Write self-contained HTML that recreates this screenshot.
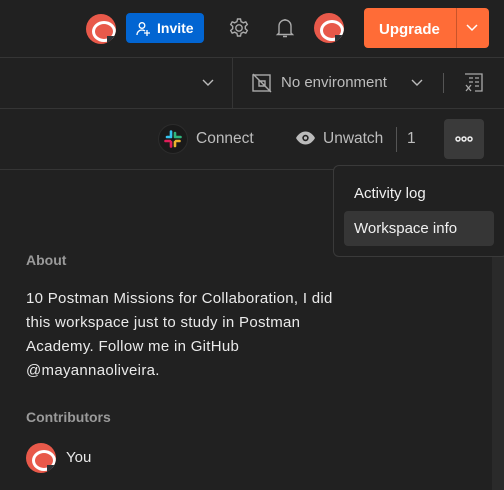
<!DOCTYPE html>
<html><head><meta charset="utf-8"><style>
*{margin:0;padding:0;box-sizing:border-box}
body{width:504px;height:490px;background:#212121;font-family:"Liberation Sans",sans-serif;position:relative;overflow:hidden;color:#e6e6e6}
.abs{position:absolute}
.line{position:absolute;left:0;right:0;height:1px;background:#353535}
.av{position:absolute;width:30px;height:30px;border-radius:50%;background:#e8594a;overflow:hidden}
.av:before{content:"";position:absolute;left:6px;top:7px;width:18px;height:15px;border:3.5px solid #fff;border-radius:50%;background:#e8594a}
.av:after{content:"";position:absolute;right:1px;bottom:1px;width:8px;height:7px;background:#2c3236}
</style></head><body>
<div class="av" style="left:86px;top:14px"></div>
<div class="abs" style="left:126px;top:13px;width:78px;height:30px;background:#0265d2;border-radius:4px;color:#fff;font-weight:bold;font-size:14px;line-height:30px;padding-left:31px">Invite
<svg class="abs" style="left:10px;top:8px" width="16" height="16" viewBox="0 0 16 16" fill="none" stroke="#fff" stroke-width="1.3"><circle cx="6" cy="4.5" r="2.8"/><path d="M1 14c0-3 2.2-5 5-5 1.3 0 2.3.4 3 1M11 9v6M8 12h6"/></svg></div>
<svg class="abs" style="left:228px;top:17px" width="22" height="22" viewBox="0 0 22 22" fill="none" stroke="#aaa" stroke-width="1.4"><circle cx="11" cy="11" r="3.2"/><path d="M9.5 2h3l.6 2.6 2.2 1.2 2.5-.9 1.5 2.6-2 1.8v2.4l2 1.8-1.5 2.6-2.5-.9-2.2 1.2-.6 2.6h-3l-.6-2.6-2.2-1.2-2.5.9-1.5-2.6 2-1.8V9.3l-2-1.8 1.5-2.6 2.5.9 2.2-1.2z"/></svg>
<svg class="abs" style="left:275px;top:17px" width="20" height="22" viewBox="0 0 20 22" fill="none" stroke="#aaa" stroke-width="1.4"><path d="M10 2v1.5M4 16V9a6 6 0 0112 0v7l1.5 1.5h-15zM8 19.5h4"/></svg>
<div class="av" style="left:314px;top:13px"></div>
<div class="abs" style="left:364px;top:8px;width:125px;height:40px;background:#ff6c37;border-radius:4px;color:#fff;font-weight:bold;font-size:15px;line-height:40px;padding-left:15px;padding-top:2px">Upgrade</div>
<div class="abs" style="left:456px;top:8px;width:1px;height:40px;background:#c9542a"></div>
<svg class="abs" style="left:466px;top:24px" width="12" height="8" viewBox="0 0 12 8" fill="none" stroke="#fff" stroke-width="1.5"><path d="M1 1l5 5 5-5"/></svg>
<div class="line" style="top:57px"></div>
<svg class="abs" style="left:202px;top:79px" width="12" height="8" viewBox="0 0 12 8" fill="none" stroke="#bbb" stroke-width="1.4"><path d="M1 1l5 5 5-5"/></svg>
<div class="abs" style="left:232px;top:58px;width:1px;height:50px;background:#353535"></div>
<svg class="abs" style="left:252px;top:73px" width="20" height="20" viewBox="0 0 20 20" fill="none" stroke="#aaa" stroke-width="1.4"><rect x="1" y="2" width="17" height="16"/><path d="M1 1l18 18M7 8h6v5H7z"/></svg>
<div class="abs" style="left:281px;top:74px;font-size:15px;color:#bdbdbd">No environment</div>
<svg class="abs" style="left:411px;top:79px" width="12" height="8" viewBox="0 0 12 8" fill="none" stroke="#bbb" stroke-width="1.4"><path d="M1 1l5 5 5-5"/></svg>
<div class="abs" style="left:443px;top:73px;width:1px;height:20px;background:#555"></div>
<svg class="abs" style="left:464px;top:73px" width="20" height="20" viewBox="0 0 20 20" fill="none" stroke="#aaa" stroke-width="1.3"><path d="M1 1h17v17h-7M5 5h4M11 5h4M11 9h4M11 13h4M5 9h4M2 12l5 6M7 12l-5 6"/></svg>
<div class="line" style="top:108px"></div>
<div class="abs" style="left:158px;top:124px;width:30px;height:30px;border-radius:50%;background:#1a1a1a;border:1px solid #2c2c2c"></div>
<svg class="abs" style="left:164px;top:130px" width="18" height="18" viewBox="0 0 18 18" stroke-linecap="round" stroke-width="2.6" fill="none"><path d="M7 1.5v4.5M3 7h4" stroke="#36c5f0"/><path d="M11 3v4M12 7h4.5" stroke="#2eb67d"/><path d="M6 11H1.5M7 12v4.5" stroke="#e01e5a"/><path d="M11 12v4M12 11h3.5" stroke="#ecb22e"/></svg>
<div class="abs" style="left:196px;top:130px;font-size:15.5px;color:#bdbdbd">Connect</div>
<svg class="abs" style="left:295px;top:130px" width="21" height="16" viewBox="0 0 21 16"><path d="M1 8c2.5-4.5 6-6.5 9.5-6.5S17.5 3.5 20 8c-2.5 4.5-6 6.5-9.5 6.5S3.5 12.5 1 8z" fill="#bbb"/><circle cx="10.5" cy="8" r="3.2" fill="#212121"/><circle cx="10.5" cy="8" r="1.6" fill="#bbb"/></svg>
<div class="abs" style="left:323px;top:130px;font-size:15.5px;color:#bdbdbd">Unwatch</div>
<div class="abs" style="left:396px;top:127px;width:1px;height:25px;background:#555"></div>
<div class="abs" style="left:407px;top:130px;font-size:15.5px;color:#bdbdbd">1</div>
<div class="abs" style="left:444px;top:119px;width:40px;height:40px;background:#3a3a3a;border-radius:4px"></div>
<svg class="abs" style="left:455px;top:135px" width="18" height="8" viewBox="0 0 18 8" fill="none" stroke="#eee" stroke-width="1.5"><circle cx="3" cy="4" r="2"/><circle cx="9" cy="4" r="2"/><circle cx="15" cy="4" r="2"/></svg>
<div class="line" style="top:169px"></div>
<div class="abs" style="left:492px;top:256px;width:12px;height:234px;background:#2a2a2a"></div>
<div class="abs" style="left:333px;top:165px;width:175px;height:92px;background:#212121;border:1px solid #3a3a3a;border-radius:6px"></div>
<div class="abs" style="left:354px;top:185px;font-size:15px;color:#f0f0f0">Activity log</div>
<div class="abs" style="left:344px;top:211px;width:150px;height:35px;background:#363636;border-radius:4px"></div>
<div class="abs" style="left:354px;top:220px;font-size:15px;color:#f0f0f0">Workspace info</div>
<div class="abs" style="left:26px;top:252px;font-size:14px;font-weight:bold;color:#9a9a9a">About</div>
<div class="abs" style="left:26px;top:287px;font-size:15px;line-height:24px;color:#eaeaea;width:325px;letter-spacing:0.3px">10 Postman Missions for Collaboration, I did this workspace just to study in Postman Academy. Follow me in GitHub @mayannaoliveira.</div>
<div class="abs" style="left:26px;top:409px;font-size:14px;font-weight:bold;color:#9a9a9a">Contributors</div>
<div class="av" style="left:26px;top:443px"></div>
<div class="abs" style="left:66px;top:449px;font-size:15px;color:#eaeaea">You</div>
</body></html>
